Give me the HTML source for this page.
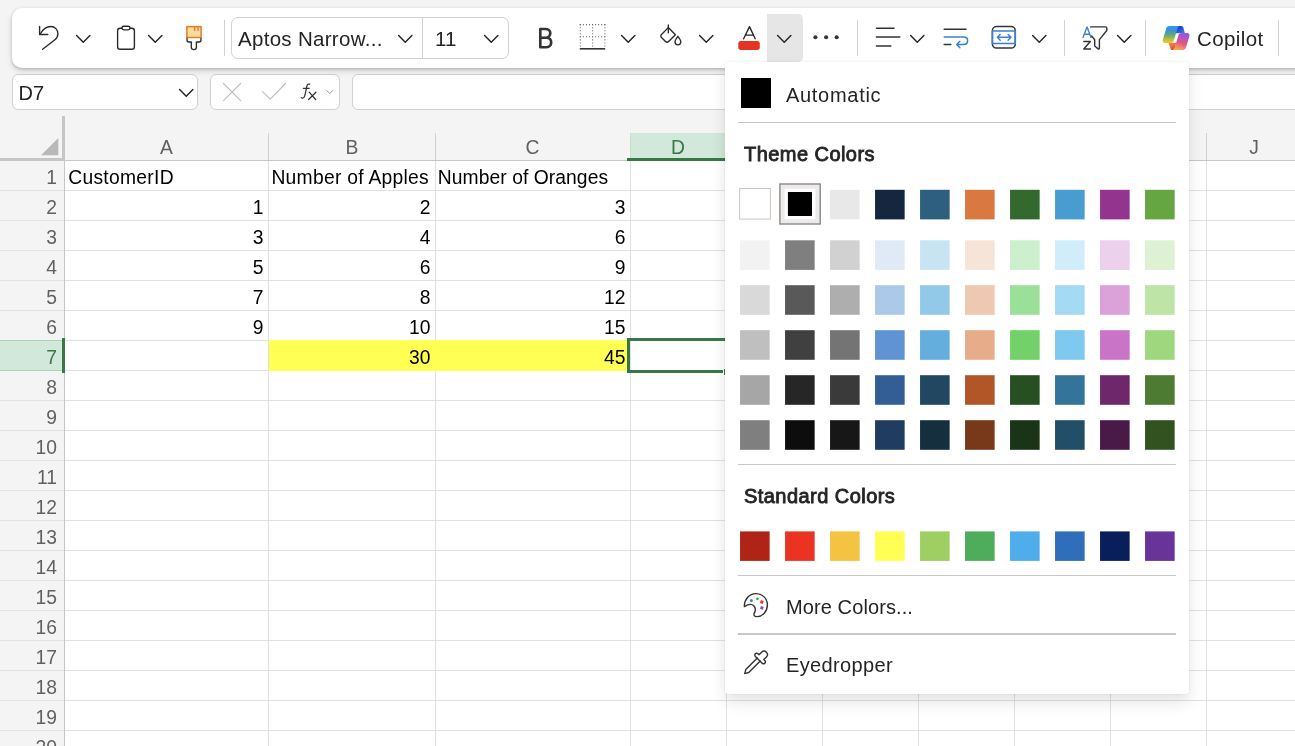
<!DOCTYPE html><html><head><meta charset="utf-8"><title>Excel</title><style>
*{box-sizing:border-box;margin:0;padding:0}
html,body{width:1295px;height:746px;overflow:hidden;background:#f4f4f4;font-family:"Liberation Sans",sans-serif;}
.abs{position:absolute}
#root{will-change:transform;position:relative;width:1295px;height:746px;overflow:hidden;background:#f4f4f4}
#ribbon{left:12px;top:8px;width:1320px;height:60px;background:#fff;border-radius:10px;box-shadow:0 1px 3px rgba(0,0,0,.18),0 3px 6px rgba(0,0,0,.14)}
.box{background:#fff;border:1px solid #d1d1d1;border-radius:6px}
.sep{width:1px;background:#d1d1d1;top:20px;height:36px}
.ui{color:#242424;white-space:nowrap}
.cell{font-size:19.3px;color:#000;white-space:nowrap;line-height:30px;height:30px}
.rh{font-size:19.3px;color:#616161;text-align:right;line-height:30px;height:30px;left:0;width:57px}
.ch{font-size:19.3px;color:#616161;text-align:center;line-height:28px;height:28px;top:134px}
.hl{background:#e1e1e1;height:1px;left:65px;width:1230px}
.vl{background:#e1e1e1;width:1px;top:161px;height:600px}
.hvl{background:#d0d0d0;width:1px;top:133px;height:27px}
#popup{left:725px;top:62px;width:464px;height:632px;background:#fff;border-radius:3px;box-shadow:0 0 2px rgba(0,0,0,.10),0 8px 16px rgba(0,0,0,.11)}
.sw{width:30px;height:30px}
.psep{left:13px;width:438px;height:1px;background:#c8c6c4}
.ptxt{font-size:20px;color:#242424;white-space:nowrap}
.phead{font-size:20px;font-weight:normal;color:#242424;white-space:nowrap;-webkit-text-stroke:.85px #242424}
svg{position:absolute;overflow:visible}
</style></head><body><div id="root">
<div class="abs" style="left:65px;top:161px;width:1230px;height:600px;background:#fff"></div>
<div class="abs" style="left:630px;top:133px;width:98px;height:28px;background:#d1e8da"></div>
<div class="abs" style="left:0;top:341px;width:64px;height:30px;background:#d1e8da"></div>
<div class="abs" style="left:0;top:160px;width:1295px;height:1px;background:#c6c6c6"></div>
<div class="abs" style="left:0;top:190px;width:1295px;height:1px;background:#e1e1e1"></div>
<div class="abs" style="left:0;top:220px;width:1295px;height:1px;background:#e1e1e1"></div>
<div class="abs" style="left:0;top:250px;width:1295px;height:1px;background:#e1e1e1"></div>
<div class="abs" style="left:0;top:280px;width:1295px;height:1px;background:#e1e1e1"></div>
<div class="abs" style="left:0;top:310px;width:1295px;height:1px;background:#e1e1e1"></div>
<div class="abs" style="left:0;top:340px;width:1295px;height:1px;background:#e1e1e1"></div>
<div class="abs" style="left:0;top:370px;width:1295px;height:1px;background:#e1e1e1"></div>
<div class="abs" style="left:0;top:400px;width:1295px;height:1px;background:#e1e1e1"></div>
<div class="abs" style="left:0;top:430px;width:1295px;height:1px;background:#e1e1e1"></div>
<div class="abs" style="left:0;top:460px;width:1295px;height:1px;background:#e1e1e1"></div>
<div class="abs" style="left:0;top:490px;width:1295px;height:1px;background:#e1e1e1"></div>
<div class="abs" style="left:0;top:520px;width:1295px;height:1px;background:#e1e1e1"></div>
<div class="abs" style="left:0;top:550px;width:1295px;height:1px;background:#e1e1e1"></div>
<div class="abs" style="left:0;top:580px;width:1295px;height:1px;background:#e1e1e1"></div>
<div class="abs" style="left:0;top:610px;width:1295px;height:1px;background:#e1e1e1"></div>
<div class="abs" style="left:0;top:640px;width:1295px;height:1px;background:#e1e1e1"></div>
<div class="abs" style="left:0;top:670px;width:1295px;height:1px;background:#e1e1e1"></div>
<div class="abs" style="left:0;top:700px;width:1295px;height:1px;background:#e1e1e1"></div>
<div class="abs" style="left:0;top:730px;width:1295px;height:1px;background:#e1e1e1"></div>
<div class="abs" style="left:0;top:760px;width:1295px;height:1px;background:#e1e1e1"></div>
<div class="abs vl" style="left:268px"></div>
<div class="abs hvl" style="left:268px"></div>
<div class="abs vl" style="left:435px"></div>
<div class="abs hvl" style="left:435px"></div>
<div class="abs vl" style="left:630px"></div>
<div class="abs hvl" style="left:630px"></div>
<div class="abs vl" style="left:726px"></div>
<div class="abs hvl" style="left:726px"></div>
<div class="abs vl" style="left:822px"></div>
<div class="abs hvl" style="left:822px"></div>
<div class="abs vl" style="left:918px"></div>
<div class="abs hvl" style="left:918px"></div>
<div class="abs vl" style="left:1014px"></div>
<div class="abs hvl" style="left:1014px"></div>
<div class="abs vl" style="left:1110px"></div>
<div class="abs hvl" style="left:1110px"></div>
<div class="abs vl" style="left:1206px"></div>
<div class="abs hvl" style="left:1206px"></div>
<div class="abs" style="left:64px;top:161px;width:1px;height:600px;background:#c6c6c6"></div>
<div class="abs" style="left:62px;top:116px;width:3px;height:45px;background:#c6c6c6"></div>
<div class="abs" style="left:0;top:158px;width:65px;height:3px;background:#c6c6c6"></div>
<svg class="abs" style="left:41.4px;top:137.8px" width="17.3" height="17.3" viewBox="0 0 19 19"><path d="M19 0V19H0Z" fill="#b9b9b9"/></svg>
<div class="abs" style="left:630px;top:133px;width:1px;height:25px;background:#c3e1cd"></div>
<div class="abs" style="left:627px;top:158px;width:100px;height:3px;background:#387848"></div>
<div class="abs" style="left:0;top:340px;width:62px;height:1px;background:#a6d4b6"></div>
<div class="abs" style="left:0;top:370px;width:62px;height:1px;background:#a6d4b6"></div>
<div class="abs" style="left:62px;top:338px;width:3px;height:35px;background:#387848"></div>
<div class="abs" style="left:269px;top:340px;width:359px;height:31px;background:#FFFF54"></div>
<div class="abs" style="left:627px;top:338px;width:104px;height:35px;border:3px solid #387848;"></div>
<div class="abs" style="left:723px;top:370px;width:1px;height:3px;background:#fff"></div>
<div class="abs" style="left:724px;top:369px;width:1px;height:6px;background:#387848"></div>
<div class="abs ch" style="left:136.5px;width:60px;color:#616161">A</div>
<div class="abs ch" style="left:322px;width:60px;color:#616161">B</div>
<div class="abs ch" style="left:502.5px;width:60px;color:#616161">C</div>
<div class="abs ch" style="left:648px;width:60px;color:#387848">D</div>
<div class="abs ch" style="left:1224px;width:60px;color:#616161">J</div>
<div class="abs rh" style="top:163px">1</div>
<div class="abs rh" style="top:193px">2</div>
<div class="abs rh" style="top:223px">3</div>
<div class="abs rh" style="top:253px">4</div>
<div class="abs rh" style="top:283px">5</div>
<div class="abs rh" style="top:313px">6</div>
<div class="abs rh" style="top:343px;color:#387848">7</div>
<div class="abs rh" style="top:373px">8</div>
<div class="abs rh" style="top:403px">9</div>
<div class="abs rh" style="top:433px">10</div>
<div class="abs rh" style="top:463px">11</div>
<div class="abs rh" style="top:493px">12</div>
<div class="abs rh" style="top:523px">13</div>
<div class="abs rh" style="top:553px">14</div>
<div class="abs rh" style="top:583px">15</div>
<div class="abs rh" style="top:613px">16</div>
<div class="abs rh" style="top:643px">17</div>
<div class="abs rh" style="top:673px">18</div>
<div class="abs rh" style="top:703px">19</div>
<div class="abs rh" style="top:733px">20</div>
<div class="abs cell" style="left:68.2px;top:163px;letter-spacing:0.28px">CustomerID</div>
<div class="abs cell" style="left:271.4px;top:163px;letter-spacing:0.27px">Number of Apples</div>
<div class="abs cell" style="left:437.8px;top:163px;letter-spacing:0.06px">Number of Oranges</div>
<div class="abs cell" style="left:65px;width:198.5px;text-align:right;top:193px">1</div>
<div class="abs cell" style="left:269px;width:161.5px;text-align:right;top:193px">2</div>
<div class="abs cell" style="left:436px;width:189.5px;text-align:right;top:193px">3</div>
<div class="abs cell" style="left:65px;width:198.5px;text-align:right;top:223px">3</div>
<div class="abs cell" style="left:269px;width:161.5px;text-align:right;top:223px">4</div>
<div class="abs cell" style="left:436px;width:189.5px;text-align:right;top:223px">6</div>
<div class="abs cell" style="left:65px;width:198.5px;text-align:right;top:253px">5</div>
<div class="abs cell" style="left:269px;width:161.5px;text-align:right;top:253px">6</div>
<div class="abs cell" style="left:436px;width:189.5px;text-align:right;top:253px">9</div>
<div class="abs cell" style="left:65px;width:198.5px;text-align:right;top:283px">7</div>
<div class="abs cell" style="left:269px;width:161.5px;text-align:right;top:283px">8</div>
<div class="abs cell" style="left:436px;width:189.5px;text-align:right;top:283px">12</div>
<div class="abs cell" style="left:65px;width:198.5px;text-align:right;top:313px">9</div>
<div class="abs cell" style="left:269px;width:161.5px;text-align:right;top:313px">10</div>
<div class="abs cell" style="left:436px;width:189.5px;text-align:right;top:313px">15</div>
<div class="abs cell" style="left:269px;width:161.5px;text-align:right;top:343px">30</div>
<div class="abs cell" style="left:436px;width:189.5px;text-align:right;top:343px">45</div>
<div class="abs box" style="left:12px;top:74px;width:186px;height:36px"></div>
<div class="abs ui" style="left:18.6px;top:81px;font-size:20px;line-height:24px">D7</div>
<div class="abs box" style="left:210px;top:74px;width:130px;height:36px"></div>
<div class="abs box" style="left:352px;top:74px;width:960px;height:36px"></div>
<div id="ribbon" class="abs"></div>
<div class="abs box" style="left:231px;top:17px;width:278px;height:42px;border-radius:7px"></div>
<div class="abs" style="left:422px;top:18px;width:1px;height:40px;background:#d1d1d1"></div>
<div class="abs ui" id="fontname" style="left:238px;top:26.4px;font-size:20.5px;line-height:26px;letter-spacing:.3px">Aptos Narrow...</div>
<div class="abs ui" id="fontsize" style="left:435px;top:26px;font-size:20.5px;line-height:26px">11</div>
<div class="abs sep" style="left:224px"></div>
<div class="abs sep" style="left:857px"></div>
<div class="abs sep" style="left:1064px"></div>
<div class="abs sep" style="left:1145px"></div>
<div class="abs sep" style="left:1278px"></div>
<div class="abs" style="left:767px;top:14px;width:36px;height:48px;background:#e6e6e6;border-radius:0 5px 5px 0"></div>
<div class="abs ui" id="copilot" style="left:1197px;top:26px;font-size:20.5px;line-height:26px;letter-spacing:.4px">Copilot</div>
<svg style="left:76px;top:34.5px" width="14.5" height="8" viewBox="0 0 14.5 8"><path d="M0.6 0.6 L7.25 7.2 L13.9 0.6" fill="none" stroke="#242424" stroke-width="1.45" stroke-linecap="round" stroke-linejoin="round"/></svg>
<svg style="left:148px;top:34.5px" width="14.5" height="8" viewBox="0 0 14.5 8"><path d="M0.6 0.6 L7.25 7.2 L13.9 0.6" fill="none" stroke="#242424" stroke-width="1.45" stroke-linecap="round" stroke-linejoin="round"/></svg>
<svg style="left:398px;top:34.5px" width="14.5" height="8" viewBox="0 0 14.5 8"><path d="M0.6 0.6 L7.25 7.2 L13.9 0.6" fill="none" stroke="#242424" stroke-width="1.45" stroke-linecap="round" stroke-linejoin="round"/></svg>
<svg style="left:484px;top:34.5px" width="14.5" height="8" viewBox="0 0 14.5 8"><path d="M0.6 0.6 L7.25 7.2 L13.9 0.6" fill="none" stroke="#242424" stroke-width="1.45" stroke-linecap="round" stroke-linejoin="round"/></svg>
<svg style="left:620.5px;top:34.5px" width="14.5" height="8" viewBox="0 0 14.5 8"><path d="M0.6 0.6 L7.25 7.2 L13.9 0.6" fill="none" stroke="#242424" stroke-width="1.45" stroke-linecap="round" stroke-linejoin="round"/></svg>
<svg style="left:699px;top:34.5px" width="14.5" height="8" viewBox="0 0 14.5 8"><path d="M0.6 0.6 L7.25 7.2 L13.9 0.6" fill="none" stroke="#242424" stroke-width="1.45" stroke-linecap="round" stroke-linejoin="round"/></svg>
<svg style="left:776.5px;top:34.5px" width="14.5" height="8" viewBox="0 0 14.5 8"><path d="M0.6 0.6 L7.25 7.2 L13.9 0.6" fill="none" stroke="#242424" stroke-width="1.45" stroke-linecap="round" stroke-linejoin="round"/></svg>
<svg style="left:909.5px;top:34.5px" width="14.5" height="8" viewBox="0 0 14.5 8"><path d="M0.6 0.6 L7.25 7.2 L13.9 0.6" fill="none" stroke="#242424" stroke-width="1.45" stroke-linecap="round" stroke-linejoin="round"/></svg>
<svg style="left:1031.5px;top:34.5px" width="14.5" height="8" viewBox="0 0 14.5 8"><path d="M0.6 0.6 L7.25 7.2 L13.9 0.6" fill="none" stroke="#242424" stroke-width="1.45" stroke-linecap="round" stroke-linejoin="round"/></svg>
<svg style="left:1117px;top:34.5px" width="14.5" height="8" viewBox="0 0 14.5 8"><path d="M0.6 0.6 L7.25 7.2 L13.9 0.6" fill="none" stroke="#242424" stroke-width="1.45" stroke-linecap="round" stroke-linejoin="round"/></svg>
<svg style="left:178.8px;top:89.2px" width="14.5" height="8" viewBox="0 0 14.5 8"><path d="M0.6 0.6 L7.25 7.2 L13.9 0.6" fill="none" stroke="#242424" stroke-width="1.45" stroke-linecap="round" stroke-linejoin="round"/></svg>
<svg style="left:325.5px;top:90.3px" width="7.5" height="4.2" viewBox="0 0 7.5 4.2"><path d="M0.6 0.6 L3.75 3.4000000000000004 L6.9 0.6" fill="none" stroke="#9a9a9a" stroke-width="1" stroke-linecap="round" stroke-linejoin="round"/></svg>
<svg style="left:0;top:0" width="1295" height="120" viewBox="0 0 1295 120" fill="none" stroke-linecap="round" stroke-linejoin="round">
<defs>
<linearGradient id="cgl" x1="0" y1="0" x2="0" y2="1"><stop offset="0" stop-color="#2F9CF2"/><stop offset=".28" stop-color="#3F8FD8"/><stop offset=".55" stop-color="#5FAE70"/><stop offset=".82" stop-color="#C9BE3A"/><stop offset="1" stop-color="#F5C61E"/></linearGradient>
<linearGradient id="cgr" x1="0.6" y1="0" x2="0.3" y2="1"><stop offset="0" stop-color="#9A52EC"/><stop offset=".3" stop-color="#BC55B8"/><stop offset=".55" stop-color="#E2567F"/><stop offset=".8" stop-color="#EE8568"/><stop offset="1" stop-color="#F5AE48"/></linearGradient>
<linearGradient id="cgt" x1="0" y1="0" x2="1" y2="1"><stop offset="0" stop-color="#1226C8"/><stop offset=".6" stop-color="#2B5FDC"/><stop offset="1" stop-color="#3C8BE8"/></linearGradient>
<linearGradient id="cgb" x1="0" y1="0" x2="0.6" y2="1"><stop offset="0" stop-color="#F08A45"/><stop offset=".6" stop-color="#E96A3C"/><stop offset="1" stop-color="#D63A2A"/></linearGradient>
</defs>
<!-- undo -->
<g stroke="#2a2a2a" stroke-width="1.38">
<path d="M39.6 26.4V34.5H47.8"/>
<path d="M40.2 34C42.6 29.6 46.3 26.5 50.9 26.5C55 26.5 57.9 29.8 57.9 33.8C57.9 36.4 56.9 38.2 54.9 39.8L42.6 49.3"/>
<!-- clipboard -->
<rect x="117.6" y="28.3" width="16.8" height="21" rx="2.6"/>
<rect x="122" y="26.3" width="8" height="3.6" rx="1.8" fill="#fff"/>
</g>
<!-- format painter -->
<rect x="186.9" y="26.6" width="14.2" height="10.9" fill="#F8DC98" stroke="#E07C2C" stroke-width="1.5" stroke-linejoin="miter"/>
<path d="M194.7 26.8V31M198.1 26.8V31" stroke="#E07C2C" stroke-width="1.3" stroke-linecap="butt"/>
<path d="M187 38.3V40C187 41.2 187.9 42 189 42H191.3V47.3C191.3 48.6 192.4 49.6 193.8 49.6C195.2 49.6 196.4 48.6 196.4 47.3V42H199C200.1 42 201 41.2 201 40V38.3" stroke="#2a2a2a" stroke-width="1.35"/>
<!-- Bold -->
<path d="M540.3 29V47.2H546.4C549.3 47.2 551.2 45.1 551.2 42.4C551.2 39.7 549.3 37.7 546.4 37.7H540.3M540.3 29H545.8C548.5 29 550.3 30.9 550.3 33.3C550.3 35.8 548.5 37.7 545.8 37.7" stroke="#333" stroke-width="2.65" stroke-linejoin="round"/>
<!-- borders -->
<g stroke="#6a6a6a" stroke-width="1.05" stroke-dasharray="1.05 2" stroke-linecap="butt">
<path d="M579.8 24.6H605.4M579.8 36.7H605.4"/>
<path d="M580.3 24.1V47.5M592.6 24.1V47.5M604.9 24.1V47.5"/>
</g>
<path d="M579.8 48.8H605.2" stroke="#333" stroke-width="1.6" stroke-linecap="butt"/>
<!-- fill bucket -->
<g stroke="#2a2a2a" stroke-width="1.35">
<path d="M668.3 27.6L661.5 34.5C660.6 35.4 660.6 36.7 661.5 37.6L665.5 41.6C666.4 42.5 667.7 42.5 668.6 41.6L675.4 34.7L668.3 27.6Z"/>
<path d="M668.3 24.9V32.8"/>
<path d="M677.9 36.3C676.3 38.3 675 40.1 675 41.8C675 43.6 676.3 44.8 677.9 44.8C679.5 44.8 680.8 43.6 680.8 41.8C680.8 40.1 679.5 38.3 677.9 36.3Z"/>
</g>
<!-- font colour A -->
<path d="M743.6 38.8L749.5 26.6L755.2 38.8M745.6 35.1H753.2" stroke="#242424" stroke-width="1.35"/>
<rect x="738.3" y="41.1" width="21.5" height="8.8" rx="2.6" fill="#E63422"/>
<!-- dots -->
<g fill="#333"><circle cx="815.4" cy="37.2" r="2.05"/><circle cx="826.1" cy="37.2" r="2.05"/><circle cx="836.7" cy="37.2" r="2.05"/></g>
<!-- align -->
<path d="M876.4 28.2H894M876.4 37H899.8M876.4 45.9H890.8" stroke="#333" stroke-width="1.5"/>
<!-- wrap -->
<path d="M944.2 29.3H966M944.2 44.5H950.8" stroke="#333" stroke-width="1.5"/>
<path d="M944.2 37H963.6C965.9 37 967.6 38.6 967.6 40.7C967.6 42.9 965.9 44.5 963.6 44.5H957.2M959.9 41.3L956.7 44.5L959.9 47.8" stroke="#3A80D2" stroke-width="1.5"/>
<!-- merge -->
<rect x="992.4" y="26.5" width="22.9" height="21.6" rx="4.2" stroke="#333" stroke-width="1.5"/>
<path d="M992.4 31.1H1015.3M992.4 43.5H1015.3M992.4 31.1V43.5M1015.3 31.1V43.5" stroke="#3A80D2" stroke-width="1.5"/>
<path d="M997.3 37.3H1011M1000.2 34.4L997.3 37.3L1000.2 40.2M1008.1 34.4L1011 37.3L1008.1 40.2" stroke="#3A80D2" stroke-width="1.4"/>
<!-- sort filter -->
<path d="M1083 37.4L1087 27L1091 37.4M1084.3 34.2H1089.7" stroke="#3A80D2" stroke-width="1.35"/>
<path d="M1083.8 41.5H1090.3L1083.8 49H1090.5" stroke="#333" stroke-width="1.4"/>
<path d="M1090.6 26.9H1105.4C1106.3 26.9 1106.9 27.5 1106.9 28.4V29.8C1106.9 30.3 1106.7 30.7 1106.4 31L1099.4 39.6V48.3C1099.4 49 1098.6 49.3 1098.1 48.9L1095 46.3C1094.8 46.1 1094.7 45.9 1094.7 45.6V39.8L1091.6 36" stroke="#333" stroke-width="1.4"/>
<!-- copilot -->
<g stroke="none">
<path d="M1176.8 26H1181.1C1182.3 26 1183 26.7 1183.4 27.7L1184.9 33.2H1175Z" fill="url(#cgt)"/>
<path d="M1168.6 42.9H1176.4L1174.6 48.6C1174.2 49.6 1173.5 50 1172.6 50H1172.4C1171.4 50 1170.7 49.5 1170.4 48.5Z" fill="url(#cgb)"/>
<path d="M1169.3 26H1179.6C1178.6 26.3 1178 27.1 1177.6 28.2L1173.8 40.6C1173.4 42 1172.4 42.9 1171 42.9H1165.1C1163.4 42.9 1162.3 41.3 1162.8 39.7L1166.2 28.4C1166.7 26.8 1167.8 26 1169.3 26Z" fill="url(#cgl)"/>
<path d="M1183 50H1172.6C1173.6 49.7 1174.2 48.9 1174.6 47.8L1178.4 35.4C1178.8 34 1179.8 33.1 1181.2 33.1H1187.1C1188.8 33.1 1189.9 34.7 1189.4 36.3L1186 47.6C1185.5 49.2 1184.4 50 1183 50Z" fill="url(#cgr)"/>
</g>
<!-- formula bar: X, check, fx -->
<path d="M223.5 83.5L240.6 100.6M240.6 83.5L223.5 100.6" stroke="#bdbdbd" stroke-width="1.15"/>
<path d="M262.6 91.6L270.2 99.1L285.5 83.5" stroke="#bdbdbd" stroke-width="1.15"/>
<path d="M301.2 97.6C301.9 98.3 303.6 98.4 304.4 96.8C305.3 94.8 306.3 88.6 306.8 86.4C307.2 84.5 308.3 83.6 309.8 84.2M303.4 88.3H309.2" stroke="#333" stroke-width="1.25"/>
<path d="M309.2 92.2L315.6 99.5M315.9 92.2L308.6 99.5" stroke="#333" stroke-width="1.25"/>
</svg>

<div id="popup" class="abs">
<div class="abs" style="left:16px;top:16px;width:30px;height:30px;background:#000"></div>
<div class="abs ptxt" style="left:61px;top:21px;line-height:24px;letter-spacing:.7px">Automatic</div>
<div class="abs psep" style="top:60px"></div>
<div class="abs phead" style="left:19px;top:80px;line-height:24px;letter-spacing:.45px">Theme Colors</div>
<svg style="left:0;top:0" width="464" height="632" viewBox="725 62 464 632">
<rect x="739.6" y="188.5" width="30.8" height="30.6" fill="#fff" stroke="#c8c6c4" stroke-width="1"/>
<rect x="779.9" y="184" width="40.3" height="40" fill="#edebe9" stroke="#8a8886" stroke-width="1.4"/>
<rect x="784.6" y="188.6" width="30.8" height="30.7" fill="#fff"/>
<rect x="787.9" y="191.9" width="24.1" height="24" rx="0.6" fill="#000"/>
<rect x="830.05" y="189.8" width="29.6" height="29.6" fill="#E8E8E8"/>
<rect x="875.05" y="189.8" width="29.6" height="29.6" fill="#15273F"/>
<rect x="920.05" y="189.8" width="29.6" height="29.6" fill="#2E5F7F"/>
<rect x="965.05" y="189.8" width="29.6" height="29.6" fill="#DA7842"/>
<rect x="1010.05" y="189.8" width="29.6" height="29.6" fill="#34692E"/>
<rect x="1055.05" y="189.8" width="29.6" height="29.6" fill="#489CD0"/>
<rect x="1100.05" y="189.8" width="29.6" height="29.6" fill="#93358F"/>
<rect x="1145.05" y="189.8" width="29.6" height="29.6" fill="#65A542"/>
<rect x="740.05" y="240.3" width="29.6" height="29.6" fill="#F2F2F2"/>
<rect x="785.05" y="240.3" width="29.6" height="29.6" fill="#7F7F7F"/>
<rect x="830.05" y="240.3" width="29.6" height="29.6" fill="#D1D1D1"/>
<rect x="875.05" y="240.3" width="29.6" height="29.6" fill="#DFEAF6"/>
<rect x="920.05" y="240.3" width="29.6" height="29.6" fill="#C8E4F3"/>
<rect x="965.05" y="240.3" width="29.6" height="29.6" fill="#F7E4D8"/>
<rect x="1010.05" y="240.3" width="29.6" height="29.6" fill="#CBF0CB"/>
<rect x="1055.05" y="240.3" width="29.6" height="29.6" fill="#D1EDF9"/>
<rect x="1100.05" y="240.3" width="29.6" height="29.6" fill="#ECD0EC"/>
<rect x="1145.05" y="240.3" width="29.6" height="29.6" fill="#DEF1D3"/>
<rect x="740.05" y="285.2" width="29.6" height="29.6" fill="#D9D9D9"/>
<rect x="785.05" y="285.2" width="29.6" height="29.6" fill="#595959"/>
<rect x="830.05" y="285.2" width="29.6" height="29.6" fill="#AEAEAE"/>
<rect x="875.05" y="285.2" width="29.6" height="29.6" fill="#ADC9E9"/>
<rect x="920.05" y="285.2" width="29.6" height="29.6" fill="#93C9E8"/>
<rect x="965.05" y="285.2" width="29.6" height="29.6" fill="#EEC8B1"/>
<rect x="1010.05" y="285.2" width="29.6" height="29.6" fill="#9AE099"/>
<rect x="1055.05" y="285.2" width="29.6" height="29.6" fill="#A5DAF4"/>
<rect x="1100.05" y="285.2" width="29.6" height="29.6" fill="#DBA1D9"/>
<rect x="1145.05" y="285.2" width="29.6" height="29.6" fill="#BEE4A8"/>
<rect x="740.05" y="330.2" width="29.6" height="29.6" fill="#BFBFBF"/>
<rect x="785.05" y="330.2" width="29.6" height="29.6" fill="#404040"/>
<rect x="830.05" y="330.2" width="29.6" height="29.6" fill="#747474"/>
<rect x="875.05" y="330.2" width="29.6" height="29.6" fill="#6093D3"/>
<rect x="920.05" y="330.2" width="29.6" height="29.6" fill="#63AEDC"/>
<rect x="965.05" y="330.2" width="29.6" height="29.6" fill="#E7AD8A"/>
<rect x="1010.05" y="330.2" width="29.6" height="29.6" fill="#72D169"/>
<rect x="1055.05" y="330.2" width="29.6" height="29.6" fill="#7DC9F0"/>
<rect x="1100.05" y="330.2" width="29.6" height="29.6" fill="#CA74C7"/>
<rect x="1145.05" y="330.2" width="29.6" height="29.6" fill="#9FD77F"/>
<rect x="740.05" y="375.2" width="29.6" height="29.6" fill="#A6A6A6"/>
<rect x="785.05" y="375.2" width="29.6" height="29.6" fill="#262626"/>
<rect x="830.05" y="375.2" width="29.6" height="29.6" fill="#3A3A3A"/>
<rect x="875.05" y="375.2" width="29.6" height="29.6" fill="#335E95"/>
<rect x="920.05" y="375.2" width="29.6" height="29.6" fill="#224760"/>
<rect x="965.05" y="375.2" width="29.6" height="29.6" fill="#B25628"/>
<rect x="1010.05" y="375.2" width="29.6" height="29.6" fill="#264F22"/>
<rect x="1055.05" y="375.2" width="29.6" height="29.6" fill="#34749B"/>
<rect x="1100.05" y="375.2" width="29.6" height="29.6" fill="#6E276B"/>
<rect x="1145.05" y="375.2" width="29.6" height="29.6" fill="#4C7B31"/>
<rect x="740.05" y="420.2" width="29.6" height="29.6" fill="#7F7F7F"/>
<rect x="785.05" y="420.2" width="29.6" height="29.6" fill="#0D0D0D"/>
<rect x="830.05" y="420.2" width="29.6" height="29.6" fill="#171717"/>
<rect x="875.05" y="420.2" width="29.6" height="29.6" fill="#203D61"/>
<rect x="920.05" y="420.2" width="29.6" height="29.6" fill="#162F3F"/>
<rect x="965.05" y="420.2" width="29.6" height="29.6" fill="#77391A"/>
<rect x="1010.05" y="420.2" width="29.6" height="29.6" fill="#193416"/>
<rect x="1055.05" y="420.2" width="29.6" height="29.6" fill="#224E67"/>
<rect x="1100.05" y="420.2" width="29.6" height="29.6" fill="#491947"/>
<rect x="1145.05" y="420.2" width="29.6" height="29.6" fill="#325220"/>
<rect x="740.05" y="531.4" width="29.6" height="29.5" fill="#B02418"/>
<rect x="785.05" y="531.4" width="29.6" height="29.5" fill="#EA3323"/>
<rect x="830.05" y="531.4" width="29.6" height="29.5" fill="#F5C342"/>
<rect x="875.05" y="531.4" width="29.6" height="29.5" fill="#FFFF54"/>
<rect x="920.05" y="531.4" width="29.6" height="29.5" fill="#9FCE63"/>
<rect x="965.05" y="531.4" width="29.6" height="29.5" fill="#4EAD5B"/>
<rect x="1010.05" y="531.4" width="29.6" height="29.5" fill="#4EADEA"/>
<rect x="1055.05" y="531.4" width="29.6" height="29.5" fill="#2F6EBA"/>
<rect x="1100.05" y="531.4" width="29.6" height="29.5" fill="#081F5C"/>
<rect x="1145.05" y="531.4" width="29.6" height="29.5" fill="#68349A"/>
</svg>
<div class="abs psep" style="top:401.5px"></div>
<div class="abs phead" style="left:19px;top:422px;line-height:24px;letter-spacing:.45px">Standard Colors</div>
<div class="abs psep" style="top:513px"></div>
<div class="abs ptxt" style="left:61px;top:533px;line-height:24px;letter-spacing:.1px">More Colors...</div>
<div class="abs psep" style="top:571px;height:2px"></div>
<div class="abs ptxt" style="left:61px;top:590.5px;line-height:24px;letter-spacing:.35px">Eyedropper</div>
<svg style="left:0;top:0" width="464" height="632" viewBox="725 62 464 632" fill="none" stroke-linecap="round" stroke-linejoin="round">
<!-- palette -->
<path d="M744.4 606.6C744 599.6 749.2 593.6 756 593.6C762.4 593.6 767.4 598.6 767.4 604.8C767.4 611.4 762.6 616.6 756.6 616.6C754.4 616.6 753.4 615 754.2 613.4C755.6 610.6 755.8 608 754 606C751.8 603.6 748.2 604.2 744.4 606.6Z" stroke="#333" stroke-width="1.4"/>
<circle cx="751.4" cy="600.4" r="1.5" fill="#3B82D6"/><circle cx="757.4" cy="598.8" r="1.4" fill="#46A552"/><rect x="760.3" y="600.5" width="3" height="3" fill="#E23B30" transform="rotate(20 761.8 602)"/><rect x="760.4" y="606.3" width="3" height="3" fill="#9B3DB8" transform="rotate(20 761.9 607.8)"/>
<!-- eyedropper -->
<g stroke="#333" stroke-width="1.4">
<path d="M757.3 658.1L745.8 669.6L744.7 673.6L748.7 672.5L760.2 661"/>
<path d="M755.4 656.4C754.6 655.6 754.6 654.6 755.4 653.8C756.2 653 757.2 653 758 653.8L759 654.8L761.6 652.2C763 650.8 765 650.8 766.4 652.2C767.8 653.6 767.8 655.6 766.4 657L763.8 659.6L764.8 660.6C765.6 661.4 765.6 662.4 764.8 663.2C764 664 763 664 762.2 663.2Z"/>
</g>
</svg>

</div>
</div></body></html>
